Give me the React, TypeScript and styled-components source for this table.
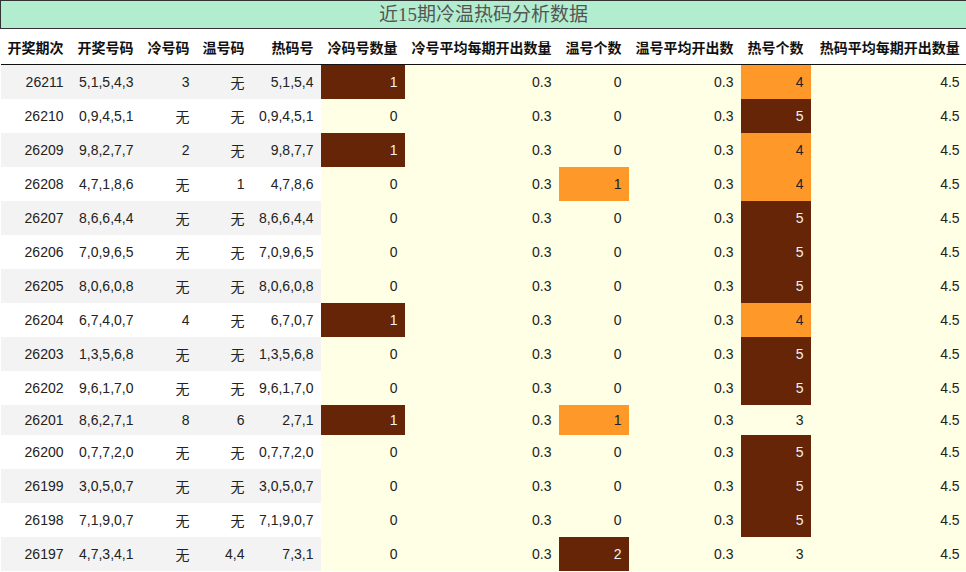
import React from "react";
import styled, { createGlobalStyle } from "styled-components";

const Global = createGlobalStyle`
  html, body { margin: 0; padding: 0; background: #fff; }
  body { font-family: "Liberation Sans", "Noto Sans CJK SC", sans-serif; }
`;

const Table = styled.table`
  width: 966px;
  border-collapse: collapse;
  table-layout: fixed;
  font-family: "Liberation Sans", "Noto Sans CJK SC", sans-serif;
  font-size: 14px;
  color: #222;
`;

const TitleCell = styled.th`
  background: #b3edd0;
  border: 1px solid #333;
  color: #555;
  font-family: "Liberation Serif", "Noto Sans CJK SC", serif;
  font-size: 19px;
  font-weight: normal;
  height: 27px;
  padding: 0;
  line-height: 27px;
  text-align: center;
`;

const HeadRow = styled.tr`
  border-bottom: 1px solid #111;
`;

const HeadCell = styled.th`
  background: #fff;
  font-weight: bold;
  text-align: right;
  padding: 8px 7px 7px 0;
  white-space: nowrap;
  color: #111;
`;

const Row = styled.tr<{ $odd: boolean }>`
  background: ${(p) => (p.$odd ? "#f3f3f3" : "#fff")};
`;

const Cell = styled.td`
  text-align: right;
  padding: 7px 7px 7px 0;
  white-space: nowrap;
`;

type Tone = "none" | "orange" | "dark";

const StatCell = styled.td<{ $tone: Tone }>`
  text-align: right;
  padding: 7px 7px 7px 0;
  white-space: nowrap;
  background: ${(p) =>
    p.$tone === "dark" ? "#662506" : p.$tone === "orange" ? "#fe9929" : "#ffffe5"};
  color: ${(p) => (p.$tone === "dark" ? "#f2f2f2" : "#222")};
`;

const widths = [70, 70, 56, 55, 69, 84, 154, 70, 112, 70, 156];

const headers = [
  "开奖期次",
  "开奖号码",
  "冷号码",
  "温号码",
  "热码号",
  "冷码号数量",
  "冷号平均每期开出数量",
  "温号个数",
  "温号平均开出数",
  "热号个数",
  "热码平均每期开出数量",
];

type R = [string, string, string, string, string, number, number, number];

const rows: R[] = [
  ["26211", "5,1,5,4,3", "3", "无", "5,1,5,4", 1, 0, 4],
  ["26210", "0,9,4,5,1", "无", "无", "0,9,4,5,1", 0, 0, 5],
  ["26209", "9,8,2,7,7", "2", "无", "9,8,7,7", 1, 0, 4],
  ["26208", "4,7,1,8,6", "无", "1", "4,7,8,6", 0, 1, 4],
  ["26207", "8,6,6,4,4", "无", "无", "8,6,6,4,4", 0, 0, 5],
  ["26206", "7,0,9,6,5", "无", "无", "7,0,9,6,5", 0, 0, 5],
  ["26205", "8,0,6,0,8", "无", "无", "8,0,6,0,8", 0, 0, 5],
  ["26204", "6,7,4,0,7", "4", "无", "6,7,0,7", 1, 0, 4],
  ["26203", "1,3,5,6,8", "无", "无", "1,3,5,6,8", 0, 0, 5],
  ["26202", "9,6,1,7,0", "无", "无", "9,6,1,7,0", 0, 0, 5],
  ["26201", "8,6,2,7,1", "8", "6", "2,7,1", 1, 1, 3],
  ["26200", "0,7,7,2,0", "无", "无", "0,7,7,2,0", 0, 0, 5],
  ["26199", "3,0,5,0,7", "无", "无", "3,0,5,0,7", 0, 0, 5],
  ["26198", "7,1,9,0,7", "无", "无", "7,1,9,0,7", 0, 0, 5],
  ["26197", "4,7,3,4,1", "无", "4,4", "7,3,1", 0, 2, 3],
];

const coldTone = (n: number): Tone => (n >= 1 ? "dark" : "none");
const warmTone = (n: number): Tone => (n >= 2 ? "dark" : n === 1 ? "orange" : "none");
const hotTone = (n: number): Tone => (n >= 5 ? "dark" : n === 4 ? "orange" : "none");

export default function App() {
  return (
    <>
      <Global />
      <Table>
        <colgroup>
          {widths.map((w, i) => (
            <col key={i} style={{ width: w }} />
          ))}
        </colgroup>
        <thead>
          <tr>
            <TitleCell colSpan={11}>近15期冷温热码分析数据</TitleCell>
          </tr>
          <HeadRow>
            {headers.map((h) => (
              <HeadCell key={h}>{h}</HeadCell>
            ))}
          </HeadRow>
        </thead>
        <tbody>
          {rows.map((r, i) => (
            <Row key={r[0]} $odd={i % 2 === 0}>
              <Cell>{r[0]}</Cell>
              <Cell>{r[1]}</Cell>
              <Cell>{r[2]}</Cell>
              <Cell>{r[3]}</Cell>
              <Cell>{r[4]}</Cell>
              <StatCell $tone={coldTone(r[5])}>{r[5]}</StatCell>
              <StatCell $tone="none">0.3</StatCell>
              <StatCell $tone={warmTone(r[6])}>{r[6]}</StatCell>
              <StatCell $tone="none">0.3</StatCell>
              <StatCell $tone={hotTone(r[7])}>{r[7]}</StatCell>
              <StatCell $tone="none">4.5</StatCell>
            </Row>
          ))}
        </tbody>
      </Table>
    </>
  );
}
